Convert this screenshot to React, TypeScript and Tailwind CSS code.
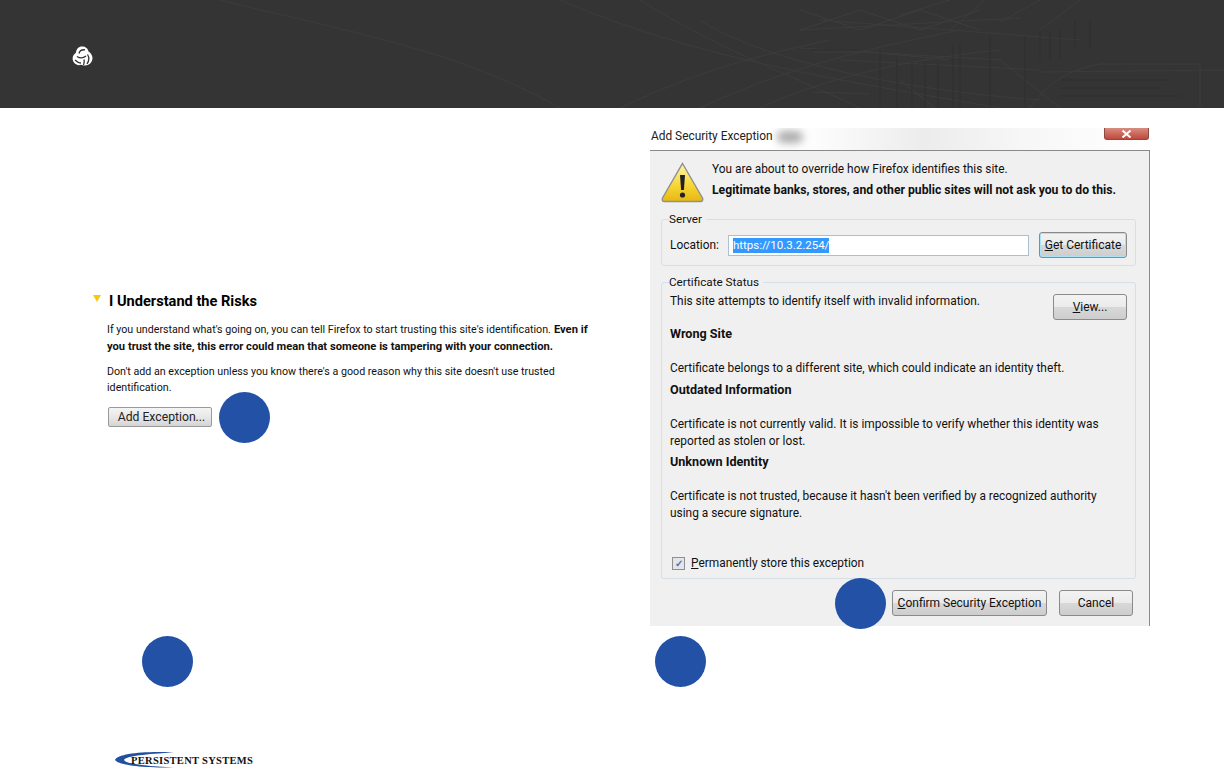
const font = "font-['Roboto','Open_Sans',sans-serif]"

function HeaderTexture() {
  const lines = [
    "M560 0 C700 60 840 80 1000 108", "M640 0 C720 50 780 70 860 108", "M700 20 C760 60 900 90 1040 100",
    "M220 0 C340 30 460 50 560 108", "M760 108 C820 80 900 60 1000 50", "M700 108 C780 70 860 50 960 30",
    "M620 108 C700 70 760 55 830 40", "M900 15 L950 0", "M1000 22 L1040 0", "M950 30 L985 0", "M1040 30 L1080 0",
    "M800 48 L1000 60", "M812 52 L870 52", "M812 92 L870 94", "M800 30 L1020 18", "M820 20 L1080 40",
    "M870 52 L950 60", "M840 60 L1040 70", "M900 80 L935 108", "M1000 60 L1060 108", "M1040 72 L1224 70",
    "M1030 108C1050 80 1070 70 1100 64H1200V108", "M800 10L860 30L920 10L980 30", "M800 30L860 10L920 30L980 10",
  ]
  return (
    <svg className="absolute inset-0 h-full w-full" viewBox="0 0 1224 108" fill="none">
      {lines.map((d) => (
        <path key={d} d={d} stroke="#3c3c3c" strokeWidth="1" />
      ))}
      <g stroke="#2f2f2f" strokeWidth="1">
        <path d="M880 52V108M897 58V108M912 62V108M925 62V108M938 62V108M953 44V108M960 44V108M990 36V108M1025 36V108" />
        <path d="M1040 30V60M1050 30V60M1060 30V60M1075 20V50M1090 20V50" />
        <path d="M1060 80H1170M1060 88H1160M1060 96H1180M810 50H860" />
      </g>
    </svg>
  )
}

function KnotLogo() {
  return (
    <svg width="21" height="20" viewBox="0 0 21 20" className="block">
      <path d="M10 0.5C13.5 0.5 16 2.5 16.5 5.5C19 7 20.5 9.5 20.5 12C20.5 16.5 17 19.5 13 19.5C11.5 19.5 10 19.2 9 18.8C7.5 19.4 6 19.4 4.5 18.6C1.5 17 0.2 14.2 0.7 11.5C1 9.5 2.2 8 3.8 7C4.2 3.2 6.6 0.5 10 0.5Z" fill="#fff" />
      <g fill="none" stroke="#333" strokeWidth="1.3">
        <path d="M7 7.5C7.5 5 9.5 3.5 13 3.8" />
        <path d="M5 10.5C8 12.5 11 12.5 14 10" />
        <path d="M15.5 8.5C17.5 11.5 17 15 15 18" />
        <path d="M12 13.5C12.5 15.5 12.3 17.5 11.5 19" />
        <path d="M3 14C5 16 7 17 9 17" />
      </g>
    </svg>
  )
}

function WarningIcon() {
  return (
    <svg width="44" height="42" viewBox="0 0 44 42" className="block">
      <defs>
        <linearGradient id="warn" x1="0" y1="0" x2="0" y2="1">
          <stop offset="0" stopColor="#fdf6b0" />
          <stop offset="0.55" stopColor="#f7d838" />
          <stop offset="1" stopColor="#e8b710" />
        </linearGradient>
      </defs>
      <path d="M21.5 1.5L41.5 36Q42.5 39.5 39.5 39.5H3.5Q0.5 39.5 1.5 36Z" fill="url(#warn)" stroke="#8f8f8f" strokeWidth="1.4" />
      <path d="M19 13H24L22.9 28H20.1Z" fill="#222" />
      <circle cx="21.5" cy="33" r="2.6" fill="#222" />
    </svg>
  )
}

function Swoosh() {
  return (
    <svg width="62" height="18" viewBox="0 0 62 18" className="absolute left-0 top-0">
      <path d="M60 1.5C28 0 4 3 1 9C4 14 28 17 60 16.5C32 15 12 13 10 9C12 5 32 3 60 1.5Z" fill="#21509f" />
    </svg>
  )
}

function Win7Button({ className, children }: { className: string; children: React.ReactNode }) {
  return (
    <button className={`flex h-[26px] items-center justify-center rounded-[3px] border border-[#8a8a8a] bg-[linear-gradient(#f3f3f3_0%,#ebebeb_48%,#d8d8d8_52%,#cdcdcd_100%)] text-[12px] text-[#111] ${className}`}>
      {children}
    </button>
  )
}

function Marker({ className }: { className: string }) {
  return <div className={`absolute h-[51px] w-[51px] rounded-full bg-[#2251a6] ${className}`} />
}

function LeftColumn() {
  return (
    <div className="w-[650px] shrink-0 pl-[93px] pt-[184px] text-black">
      <div className="flex h-[18px] items-center">
        <div className="mb-[5px] h-0 w-0 border-x-[4px] border-t-[7px] border-x-transparent border-t-[#f8c70e]" />
        <h2 className="ml-[8px] text-[14.6px] font-bold leading-[18px]">I Understand the Risks</h2>
      </div>
      <div className="ml-[14px] w-[490px] text-[10.7px] leading-[17px] text-[#111]">
        <div className="mt-[11px] flex gap-[3px] whitespace-nowrap">
          <span>If you understand what's going on, you can tell Firefox to start trusting this site's identification.</span>
          <b className="text-[11.2px]">Even if</b>
        </div>
        <p className="whitespace-nowrap text-[11.2px] font-bold">you trust the site, this error could mean that someone is tampering with your connection.</p>
        <p className="mt-[9px] leading-[16px]">
          Don't add an exception unless you know there's a good reason why this site doesn't use trusted identification.
        </p>
      </div>
      <button className="ml-[15px] mt-[11px] flex h-[20px] w-[104px] items-center justify-center rounded-[2px] border border-[#999] bg-[linear-gradient(#f4f4f4,#e8e8e8_50%,#d4d4d4)] pl-[3px] text-[12.2px] text-[#222]">
        Add Exception...
      </button>
    </div>
  )
}

function Dialog() {
  return (
    <div className="mt-[20px] flex h-[498px] w-[500px] flex-col text-[11.9px] text-[#111]">
      <div className="relative flex h-[22px] items-start overflow-hidden bg-[linear-gradient(90deg,#fff_0%,#fff_30%,#ececec_55%,#f7f7f7_75%,#fff_100%)]">
        <div className="absolute left-[127px] top-[3px] h-[12px] w-[26px] rounded-full bg-[#aaa] blur-[4px]" />
        <span className="relative ml-px mt-[-1px] leading-[18px] text-[#222]">Add Security Exception</span>
        <div className="absolute right-px top-0 flex h-[12px] w-[45px] items-center justify-center rounded-b-[3px] border border-t-0 border-[#8d4a42] bg-[linear-gradient(#d98c80,#c0483c)]">
          <svg width="11" height="8" viewBox="0 0 11 8" fill="none" stroke="#fff" strokeWidth="2">
            <path d="M1.5 0.5L9.5 7.5M9.5 0.5L1.5 7.5" />
          </svg>
        </div>
      </div>
      <div className="flex-1 border-r border-t border-[#8a8a8a] bg-[#f0f0f0] pl-[11px] pr-[13px]">
        <div className="flex h-[61px] pt-[11px]">
          <WarningIcon />
          <div className="ml-[7px]">
            <p className="mt-[-1px] leading-[17px]">You are about to override how Firefox identifies this site.</p>
            <p className="mt-[4px] text-[12.2px] font-bold leading-[17px]">Legitimate banks, stores, and other public sites will not ask you to do this.</p>
          </div>
        </div>
        <fieldset className="h-[54px] rounded-[3px] border border-[#d5dfe5] px-[8px]">
          <legend className="ml-[-1px] bg-[#f0f0f0] pr-[4px] text-[11.7px] leading-[14px]">Server</legend>
          <div className="flex items-center pt-[6px]">
            <span className="w-[58px] pt-[2px]">Location:</span>
            <div className="flex h-[21px] w-[301px] items-center border border-[#abc0d0] bg-white pl-[4px]">
              <span className="mt-px bg-[#3399ff] text-[11.5px] leading-[15px] text-white">https://10.3.2.254/</span>
            </div>
            <Win7Button className="ml-[10px] w-[88px] border-[#3c7fb1] shadow-[inset_0_0_0_1px_#a8e3f8]">
              <span><u>G</u>et Certificate</span>
            </Win7Button>
          </div>
        </fieldset>
        <fieldset className="relative mt-[9px] h-[304px] rounded-[3px] border border-[#d5dfe5] px-[8px]">
          <legend className="ml-[-1px] bg-[#f0f0f0] pr-[4px] text-[11.7px] leading-[14px]">Certificate Status</legend>
          <Win7Button className="absolute right-[8px] top-[5px] w-[74px]">
            <span><u>V</u>iew...</span>
          </Win7Button>
          <p className="mt-[4px] leading-[17px]">This site attempts to identify itself with invalid information.</p>
          <h3 className="mt-[15px] text-[12.6px] font-bold leading-[17px]">Wrong Site</h3>
          <p className="mt-[18px] leading-[17px]">Certificate belongs to a different site, which could indicate an identity theft.</p>
          <h3 className="mt-[4px] text-[12.6px] font-bold leading-[17px]">Outdated Information</h3>
          <p className="mt-[18px] w-[440px] leading-[17px]">Certificate is not currently valid. It is impossible to verify whether this identity was reported as stolen or lost.</p>
          <h3 className="mt-[3px] text-[12.6px] font-bold leading-[17px]">Unknown Identity</h3>
          <p className="mt-[18px] w-[440px] leading-[17px]">Certificate is not trusted, because it hasn't been verified by a recognized authority using a secure signature.</p>
          <label className="mt-[33px] flex items-center leading-[17px]">
            <span className="ml-[2px] flex h-[13px] w-[13px] items-center justify-center border border-[#8e8f8f] bg-[#e2e5ec] text-[10px] font-bold leading-[10px] text-[#5a6fa5]">✓</span>
            <span className="ml-[6px]"><u>P</u>ermanently store this exception</span>
          </label>
        </fieldset>
        <div className="mt-[11px] flex justify-end gap-[12px] pr-[3px]">
          <Win7Button className="w-[155px]">
            <span><u>C</u>onfirm Security Exception</span>
          </Win7Button>
          <Win7Button className="w-[74px]">Cancel</Win7Button>
        </div>
      </div>
    </div>
  )
}

export default function App() {
  return (
    <div className={`relative h-[769px] w-[1224px] overflow-hidden bg-white ${font}`}>
      <header className="relative flex h-[108px] items-center overflow-hidden bg-[#343434] pl-[72px]">
        <HeaderTexture />
        <div className="relative mt-[4px]">
          <KnotLogo />
        </div>
      </header>
      <main className="flex">
        <LeftColumn />
        <Dialog />
      </main>
      <Marker className="left-[219px] top-[392px]" />
      <Marker className="left-[835px] top-[578px]" />
      <Marker className="left-[142px] top-[636px]" />
      <Marker className="left-[655px] top-[636px]" />
      <div className="absolute left-[114px] top-[751px] h-[18px] w-[142px]">
        <Swoosh />
        <span className="absolute left-[17px] top-[3px] whitespace-nowrap font-['Liberation_Serif',serif] text-[10.5px] font-bold leading-[14px] tracking-[0.3px] text-[#111]">
          PERSISTENT SYSTEMS
        </span>
      </div>
    </div>
  )
}
